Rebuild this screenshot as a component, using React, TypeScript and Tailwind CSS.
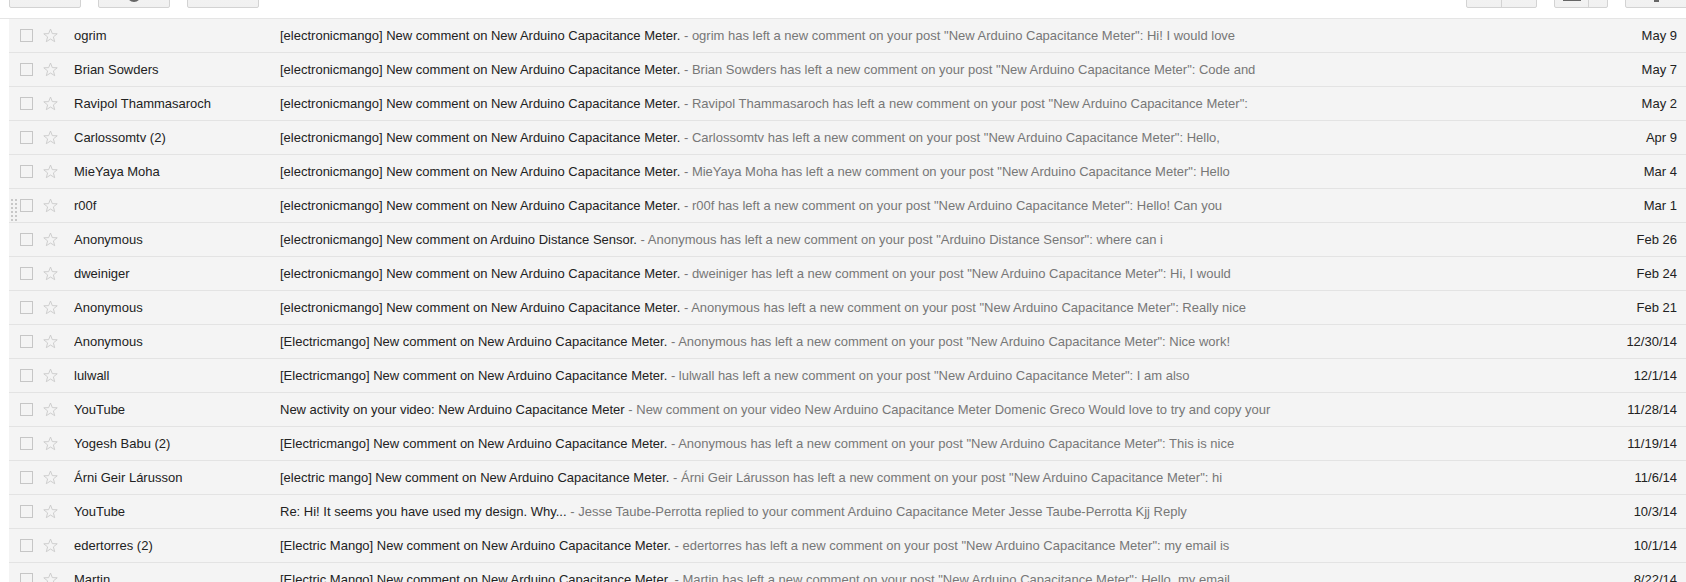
import React from "react";

type Row = { name: string; subject: string; snippet: string; date: string; handle?: boolean };

const NACM = "[electronicmango] New comment on New Arduino Capacitance Meter.";
const post = (who: string, tail: string, p = "New Arduino Capacitance Meter") =>
  `- ${who} has left a new comment on your post "${p}": ${tail}`;

const rows: Row[] = [
  { name: "ogrim", subject: NACM, snippet: post("ogrim", "Hi! I would love"), date: "May 9" },
  { name: "Brian Sowders", subject: NACM, snippet: post("Brian Sowders", "Code and"), date: "May 7" },
  { name: "Ravipol Thammasaroch", subject: NACM, snippet: post("Ravipol Thammasaroch", ""), date: "May 2" },
  { name: "Carlossomtv (2)", subject: NACM, snippet: post("Carlossomtv", "Hello,"), date: "Apr 9" },
  { name: "MieYaya Moha", subject: NACM, snippet: post("MieYaya Moha", "Hello"), date: "Mar 4" },
  { name: "r00f", subject: NACM, snippet: post("r00f", "Hello! Can you"), date: "Mar 1", handle: true },
  {
    name: "Anonymous",
    subject: "[electronicmango] New comment on Arduino Distance Sensor.",
    snippet: post("Anonymous", "where can i", "Arduino Distance Sensor"),
    date: "Feb 26",
  },
  { name: "dweiniger", subject: NACM, snippet: post("dweiniger", "Hi, I would"), date: "Feb 24" },
  { name: "Anonymous", subject: NACM, snippet: post("Anonymous", "Really nice"), date: "Feb 21" },
  {
    name: "Anonymous",
    subject: "[Electricmango] New comment on New Arduino Capacitance Meter.",
    snippet: post("Anonymous", "Nice work!"),
    date: "12/30/14",
  },
  {
    name: "lulwall",
    subject: "[Electricmango] New comment on New Arduino Capacitance Meter.",
    snippet: post("lulwall", "I am also"),
    date: "12/1/14",
  },
  {
    name: "YouTube",
    subject: "New activity on your video: New Arduino Capacitance Meter",
    snippet:
      "- New comment on your video New Arduino Capacitance Meter Domenic Greco Would love to try and copy your",
    date: "11/28/14",
  },
  {
    name: "Yogesh Babu (2)",
    subject: "[Electricmango] New comment on New Arduino Capacitance Meter.",
    snippet: post("Anonymous", "This is nice"),
    date: "11/19/14",
  },
  {
    name: "Árni Geir Lárusson",
    subject: "[electric mango] New comment on New Arduino Capacitance Meter.",
    snippet: post("Árni Geir Lárusson", "hi"),
    date: "11/6/14",
  },
  {
    name: "YouTube",
    subject: "Re: Hi! It seems you have used my design. Why...",
    snippet:
      "- Jesse Taube-Perrotta replied to your comment Arduino Capacitance Meter Jesse Taube-Perrotta Kjj Reply",
    date: "10/3/14",
  },
  {
    name: "edertorres (2)",
    subject: "[Electric Mango] New comment on New Arduino Capacitance Meter.",
    snippet: post("edertorres", "my email is"),
    date: "10/1/14",
  },
  {
    name: "Martin",
    subject: "[Electric Mango] New comment on New Arduino Capacitance Meter.",
    snippet: post("Martin", "Hello, my email"),
    date: "8/22/14",
  },
];

function Star() {
  return (
    <svg width="15" height="15" viewBox="0 0 15 15" className="shrink-0">
      <path
        d="M7.5 1 L9.3 5.6 L14.2 5.8 L10.4 8.9 L11.7 13.7 L7.5 11 L3.3 13.7 L4.6 8.9 L0.8 5.8 L5.7 5.6 Z"
        fill="none"
        stroke="#c9c9c9"
        strokeWidth="0.9"
        strokeLinejoin="round"
      />
    </svg>
  );
}

function Handle() {
  return (
    <div className="absolute left-[2px] top-[10px] grid grid-cols-2 gap-[2px]">
      {Array.from({ length: 16 }).map((_, i) => (
        <div key={i} className="w-[2px] h-[2px] bg-[#c8c8c8]" />
      ))}
    </div>
  );
}

function ToolButton({ className = "", children }: { className?: string; children?: React.ReactNode }) {
  return (
    <div
      className={`h-[30px] -mt-[22px] rounded-[2px] border border-[#d3d3d3] bg-gradient-to-b from-[#f5f5f5] to-[#f1f1f1] flex items-end justify-center ${className}`}
    >
      {children}
    </div>
  );
}

export default function App() {
  return (
    <div
      className="w-[1686px] h-[582px] overflow-hidden bg-white text-[13px] text-[#222]"
      style={{ fontFamily: '"Liberation Sans", Arial, sans-serif' }}
    >
      {/* toolbar */}
      <div className="h-[19px] flex items-start pl-[9px] border-b border-[#e5e5e5]">
        <div className="flex gap-[17px]">
          <ToolButton className="w-[72px]" />
          <ToolButton className="w-[72px]">
            <div className="w-[14px] h-[14px] rounded-full border-[3px] border-[#666] mb-[5px]" />
          </ToolButton>
          <ToolButton className="w-[72px]" />
        </div>
        <div className="flex-1" />
        <div className="flex gap-[17px] mr-[-10px]">
          <div className="h-[30px] -mt-[22px] w-[71px] rounded-[2px] border border-[#d3d3d3] bg-gradient-to-b from-[#f5f5f5] to-[#f1f1f1] flex">
            <div className="w-[35px] border-r border-[#d3d3d3]" />
          </div>
          <div className="h-[30px] -mt-[22px] w-[54px] rounded-[2px] border border-[#d3d3d3] bg-gradient-to-b from-[#f5f5f5] to-[#f1f1f1] flex">
            <div className="w-[34px] border-r border-[#d3d3d3] flex items-end justify-center">
              <div className="w-[18px] h-[2px] bg-[#666] mb-[6px]" />
            </div>
          </div>
          <div className="h-[30px] -mt-[22px] w-[71px] rounded-[2px] border border-[#d3d3d3] bg-gradient-to-b from-[#f5f5f5] to-[#f1f1f1] flex items-end">
            <div className="ml-[28px] w-[5px] h-[4px] bg-[#666] mb-[5px]" />
          </div>
        </div>
      </div>

      {/* list */}
      <div className="pl-[9px]">
        {rows.map((r, i) => (
          <div
            key={i}
            className="relative h-[34px] flex items-center bg-[#f4f4f4] border-b border-[#e3e3e3] whitespace-nowrap"
          >
            {r.handle && <Handle />}
            <div className="ml-[11px] w-[13px] h-[13px] border border-[#c6c6c6] shrink-0" />
            <div className="ml-[10px]">
              <Star />
            </div>
            <div className="ml-[16px] w-[206px] shrink-0 overflow-hidden">{r.name}</div>
            <div className="flex-1 min-w-0 overflow-hidden">
              <span>{r.subject}</span>
              <span className="text-[#777]"> {r.snippet}</span>
            </div>
            <div className="w-[80px] shrink-0 text-right pr-[9px]">{r.date}</div>
          </div>
        ))}
      </div>
    </div>
  );
}
